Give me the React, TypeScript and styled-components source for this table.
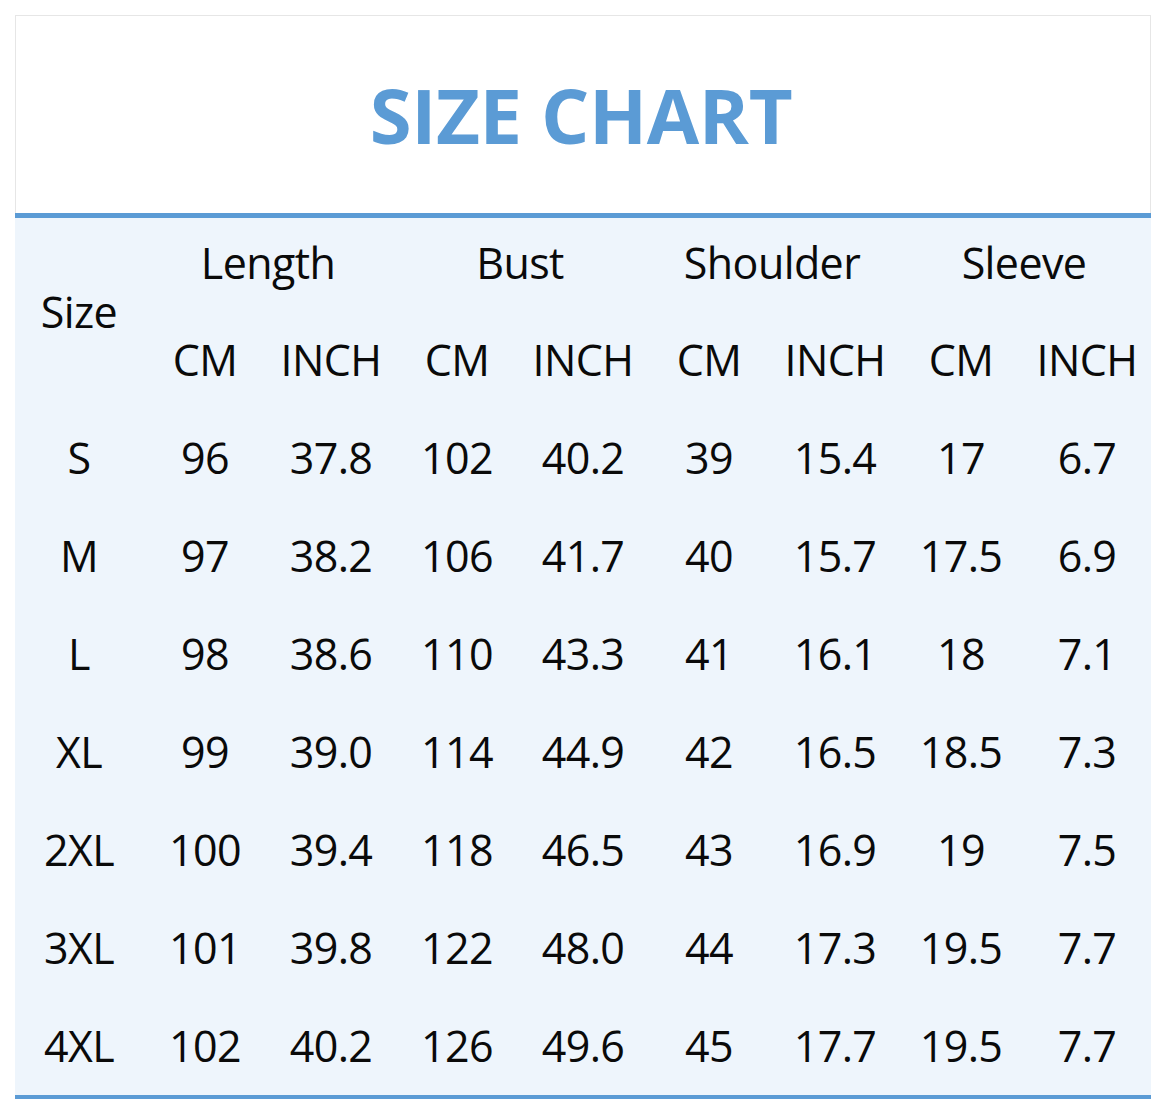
import React from "react";
import styled, { createGlobalStyle } from "styled-components";

const GlobalStyle = createGlobalStyle`
  html, body {
    margin: 0;
    padding: 0;
    background: #ffffff;
  }
  body {
    font-family: "Open Sans", "Noto Sans", sans-serif;
  }
`;

const Page = styled.div`
  width: 1166px;
  height: 1114px;
  padding: 15px 0 0 15px;
  box-sizing: border-box;
`;

const Card = styled.div`
  width: 1136px;
  display: flex;
  flex-direction: column;
`;

const Header = styled.div`
  height: 197px;
  display: flex;
  align-items: center;
  justify-content: center;
  border: 1px solid #e6e6e6;
  border-bottom: none;
  background: #ffffff;
`;

const Title = styled.h1`
  margin: 0;
  font-family: "Open Sans", sans-serif;
  font-weight: 700;
  font-size: 76px;
  line-height: 1;
  color: #5b9bd5;
  letter-spacing: -0.4px;
  padding-right: 4px;
`;

const Rule = styled.div<{ $h: number }>`
  height: ${(p) => p.$h}px;
  background: #5b9bd5;
`;

const Grid = styled.div`
  display: grid;
  grid-template-columns: repeat(9, 126px);
  grid-template-rows: 92px repeat(8, 98.1px);
  padding-left: 1px;
  background: #eef5fc;
  height: 877px;
  box-sizing: border-box;
`;

const Cell = styled.div<{
  $col?: number;
  $row?: number;
  $span?: number;
  $rows?: number;
  $lift?: number;
}>`
  display: flex;
  align-items: center;
  justify-content: center;
  padding-bottom: ${(p) => p.$lift ?? 0}px;
  font-family: "Open Sans", sans-serif;
  font-size: 43px;
  line-height: 1;
  color: #0a0a0a;
  letter-spacing: -0.6px;
  white-space: nowrap;
  grid-column: ${(p) => (p.$col ? `${p.$col} / span ${p.$span ?? 1}` : "auto")};
  grid-row: ${(p) => (p.$row ? `${p.$row} / span ${p.$rows ?? 1}` : "auto")};
`;

const groups = ["Length", "Bust", "Shoulder", "Sleeve"];

const rows: string[][] = [
  ["S", "96", "37.8", "102", "40.2", "39", "15.4", "17", "6.7"],
  ["M", "97", "38.2", "106", "41.7", "40", "15.7", "17.5", "6.9"],
  ["L", "98", "38.6", "110", "43.3", "41", "16.1", "18", "7.1"],
  ["XL", "99", "39.0", "114", "44.9", "42", "16.5", "18.5", "7.3"],
  ["2XL", "100", "39.4", "118", "46.5", "43", "16.9", "19", "7.5"],
  ["3XL", "101", "39.8", "122", "48.0", "44", "17.3", "19.5", "7.7"],
  ["4XL", "102", "40.2", "126", "49.6", "45", "17.7", "19.5", "7.7"],
];

export default function App() {
  return (
    <>
      <GlobalStyle />
      <Page>
        <Card>
          <Header>
            <Title>SIZE CHART</Title>
          </Header>
          <Rule $h={5} />
          <Grid>
            <Cell $col={1} $row={1} $rows={2} $lift={4}>
              Size
            </Cell>
            {groups.map((g, i) => (
              <Cell key={g} $col={2 + i * 2} $row={1} $span={2} $lift={4}>
                {g}
              </Cell>
            ))}
            {groups.map((g, i) => (
              <React.Fragment key={g + "-units"}>
                <Cell $col={2 + i * 2} $row={2}>
                  CM
                </Cell>
                <Cell $col={3 + i * 2} $row={2}>
                  INCH
                </Cell>
              </React.Fragment>
            ))}
            {rows.map((r, ri) =>
              r.map((v, ci) => (
                <Cell key={`${ri}-${ci}`} $col={ci + 1} $row={ri + 3}>
                  {v}
                </Cell>
              ))
            )}
          </Grid>
          <Rule $h={4} />
        </Card>
      </Page>
    </>
  );
}
